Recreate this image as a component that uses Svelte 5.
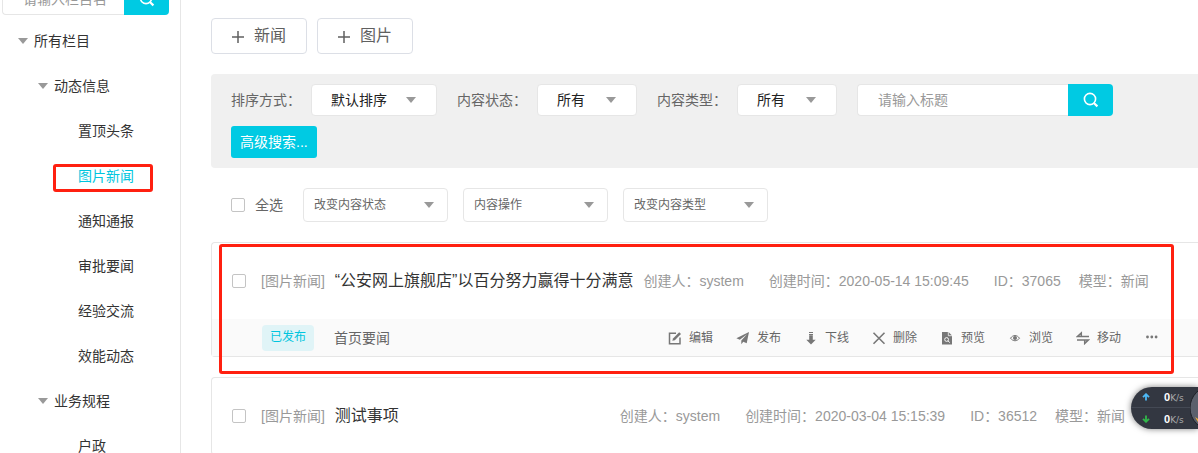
<script lang="ts">
  type Filter = { id: string; label: string; value: string; wide?: boolean };

  const sections = [
    {
      name: "动态信息",
      items: ["置顶头条", "图片新闻", "通知通报", "审批要闻", "经验交流", "效能动态"]
    },
    { name: "业务规程", items: ["户政"] }
  ];
  const activeItem = "图片新闻";

  const filters: Filter[] = [
    { id: "sort", label: "排序方式：", value: "默认排序", wide: true },
    { id: "status", label: "内容状态：", value: "所有" },
    { id: "type", label: "内容类型：", value: "所有" }
  ];

  const bulkActions = ["改变内容状态", "内容操作", "改变内容类型"];

  const articles = [
    {
      id: 37065,
      channel: "图片新闻",
      title: "“公安网上旗舰店”以百分努力赢得十分满意",
      author: "system",
      created: "2020-05-14 15:09:45",
      model: "新闻",
      status: "已发布",
      position: "首页要闻",
      marked: true
    },
    {
      id: 36512,
      channel: "图片新闻",
      title: "测试事项",
      author: "system",
      created: "2020-03-04 15:15:39",
      model: "新闻"
    }
  ];

  const actions = [
    { icon: "edit", label: "编辑" },
    { icon: "send", label: "发布" },
    { icon: "down", label: "下线" },
    { icon: "close", label: "删除" },
    { icon: "preview", label: "预览" },
    { icon: "eye", label: "浏览" },
    { icon: "move", label: "移动" }
  ];
</script>

{#snippet searchIcon()}
  <svg width="16" height="16" viewBox="0 0 16 16" fill="none" stroke="currentColor" stroke-width="1.6">
    <circle cx="7" cy="7" r="5.6" />
    <path d="M10.6 10.8 14.4 14.4" stroke-width="2.2" />
  </svg>
{/snippet}

{#snippet actionIcon(name: string)}
  <svg width="14" height="14" viewBox="0 0 14 14" fill="none" stroke="currentColor" stroke-width="1.5">
    {#if name === "edit"}
      <path d="M8 2.200H1.500v10.500h10.500V6.500" />
      <path d="M4.300 9.800 5 7.400 11.200 1.200 13 3 6.800 9.200z" fill="currentColor" stroke="none" />
    {:else if name === "send"}
      <path d="M13 1 .4 7.300l3.400 1.500L11 3.200 5.300 9.500v3.700l2-2.500 3.400 1.600z" fill="currentColor" stroke="none" />
    {:else if name === "down"}
      <path d="M5 1.500h4M5 3.500h4" stroke-width="1" />
      <path d="M5.200 4.200h3.600v4.600h2.900L7 13.400 2.300 8.800h2.900z" fill="currentColor" stroke="none" />
    {:else if name === "close"}
      <path d="M1.500 1.800 12.500 12.800M12.500 1.800 1.500 12.800" stroke-width="1.6" />
    {:else if name === "preview"}
      <path d="M2 1h6.500L12 4.500V13.500H2z" fill="currentColor" stroke="none" />
      <path d="M8.300 1v3.700H12" stroke="#fafafa" stroke-width="0.8" />
      <circle cx="6.600" cy="8.500" r="1.900" stroke="#fafafa" stroke-width="1" />
      <path d="M8 9.900 9.800 11.600" stroke="#fafafa" stroke-width="1" />
    {:else if name === "eye"}
      <path d="M2.500 7.200C5 3.600 9 3.600 11.500 7.200 9 10.600 5 10.600 2.500 7.200z" stroke-width="1" />
      <circle cx="7" cy="6.900" r="2" fill="currentColor" stroke="none" />
    {:else if name === "move"}
      <path d="M13 5.500H1.500L5.300 2v3M1 8.900h11.500L8.700 12.500v-3" />
    {:else if name === "more"}
      <g fill="currentColor" stroke="none">
        <circle cx="3.500" cy="6" r="1.400" />
        <circle cx="7.800" cy="6" r="1.400" />
        <circle cx="12.100" cy="6" r="1.400" />
      </g>
    {/if}
  </svg>
{/snippet}

<div class="app">
  <aside class="sidebar">
    <form class="search side-search">
      <input type="text" placeholder="请输入栏目名" aria-label="栏目名" />
      <button type="button" aria-label="搜索栏目">{@render searchIcon()}</button>
    </form>

    <ul class="tree">
      <li class="node root"><span class="caret"></span>所有栏目</li>
      {#each sections as section}
        <li class="node section"><span class="caret"></span>{section.name}</li>
        {#each section.items as item}
          <li class="node leaf">
            <a href="#top" class:active={item === activeItem}>{item}</a>
            {#if item === activeItem}
              <span class="mark"></span>
            {/if}
          </li>
        {/each}
      {/each}
    </ul>
  </aside>

  <main>
    <div class="toolbar">
      {#each ["新闻", "图片"] as kind}
        <button type="button" class="create">
          <svg width="12" height="14" viewBox="0 0 12 14" stroke="currentColor" stroke-width="1.5">
            <path d="M6 2v12M0 8h12" />
          </svg>
          {kind}
        </button>
      {/each}
    </div>

    <form class="filters">
      {#each filters as filter}
        <div class="field">
          <label for={filter.id}>{filter.label}</label>
          <div class="select" class:wide={filter.wide}>
            <select id={filter.id}>
              <option>{filter.value}</option>
            </select>
          </div>
        </div>
      {/each}
      <div class="search title-search">
        <input type="text" placeholder="请输入标题" aria-label="标题" />
        <button type="button" aria-label="搜索">{@render searchIcon()}</button>
      </div>
      <button type="button" class="advanced">高级搜索...</button>
    </form>

    <div class="bulk">
      <label class="check-all"><input type="checkbox" />全选</label>
      {#each bulkActions as action}
        <div class="select small">
          <select aria-label={action}>
            <option>{action}</option>
          </select>
        </div>
      {/each}
    </div>

    {#each articles as article (article.id)}
      <article class="card">
        <div class="head">
          <input type="checkbox" aria-label={article.title} />
          <span class="channel">[{article.channel}]</span>
          <span class="title">{article.title}</span>
          <span class="meta">创建人：{article.author}</span>
          <span class="meta">创建时间：{article.created}</span>
          <span class="meta">ID：{article.id}</span>
          <span class="meta model">模型：{article.model}</span>
        </div>
        {#if article.status}
          <div class="foot">
            <span class="badge">{article.status}</span>
            <span class="position">{article.position}</span>
            <div class="actions">
              {#each actions as action}
                <button type="button">{@render actionIcon(action.icon)}{action.label}</button>
              {/each}
              <button type="button" aria-label="更多">{@render actionIcon("more")}</button>
            </div>
          </div>
        {/if}
        {#if article.marked}
          <span class="mark"></span>
        {/if}
      </article>
    {/each}
  </main>

  <!-- floating network speed widget -->
  <div class="speed">
    <div class="rate up">
      <svg width="8" height="8" viewBox="0 0 8 8" fill="none" stroke="currentColor" stroke-width="1.8">
        <path d="M4 7.500V1.500M1 4.200 4 1.200 7 4.200" />
      </svg>
      <b>0</b><span>K/s</span>
    </div>
    <div class="rate down">
      <svg width="8" height="8" viewBox="0 0 8 8" fill="none" stroke="currentColor" stroke-width="1.8">
        <path d="M4 .5v6M1 3.800 4 6.800 7 3.800" />
      </svg>
      <b>0</b><span>K/s</span>
    </div>
    <svg class="ball" width="8" height="42" viewBox="0 0 8 42">
      <circle cx="22" cy="21" r="22" fill="#5b606c" stroke="#1d2026" />
      <path d="M5 30l3 2v3z" fill="#f5b23c" />
    </svg>
  </div>
</div>

<style>
  :global(body) {
    margin: 0;
    background: #fff;
  }
  .app {
    position: relative;
    display: flex;
    height: 100vh;
    overflow: hidden;
    font-family: "Liberation Sans", "Noto Sans CJK SC", sans-serif;
    font-size: 14px;
    line-height: 20px;
    color: #333;
  }
  input, button, select {
    font: inherit;
    color: inherit;
    box-sizing: border-box;
    margin: 0;
  }
  button {
    cursor: pointer;
  }
  svg {
    display: block;
    flex: none;
  }

  /* Sidebar */
  .sidebar {
    flex: none;
    width: 180px;
    border-right: 1px solid #e6e6e6;
  }
  .search {
    display: flex;
    height: 32px;
  }
  .search input {
    flex: 1;
    min-width: 0;
    padding: 0 0 0 20px;
    border: 1px solid #e6e6e6;
    border-right: none;
    border-radius: 4px 0 0 4px;
    background: #fff;
    outline: none;
  }
  .search input::placeholder {
    color: #999;
    opacity: 1;
  }
  .search button {
    display: flex;
    align-items: center;
    justify-content: center;
    width: 45px;
    padding: 0;
    border: none;
    border-radius: 0 4px 4px 0;
    background: #00cae3;
    color: #fff;
  }
  /* the column is scrolled a little, so the box starts above the top edge */
  .side-search {
    margin: -17px 11px 3px 2px;
  }
  .tree {
    list-style: none;
    margin: 0;
    padding: 0;
  }
  .node {
    position: relative;
    display: flex;
    align-items: center;
    height: 45px;
  }
  .root {
    padding-left: 18px;
  }
  .section {
    padding-left: 38px;
  }
  .leaf {
    padding-left: 78px;
  }
  .leaf a {
    color: inherit;
    text-decoration: none;
  }
  .leaf a.active {
    color: #00c5de;
  }
  .caret {
    margin-right: 6px;
    border: 5px solid transparent;
    border-top: 6px solid #999;
    border-bottom: none;
  }
  .mark {
    position: absolute;
    box-sizing: border-box;
    border: 3px solid #ff2010;
    border-radius: 3px;
    pointer-events: none;
  }
  .leaf .mark {
    top: 11px;
    left: 53px;
    width: 100px;
    height: 28px;
  }

  /* Main column */
  main {
    flex: 1;
    min-width: 0;
    padding: 18px 0 0 30px;
  }
  .toolbar {
    display: flex;
    gap: 10px;
    margin-bottom: 20px;
  }
  .create {
    display: flex;
    align-items: center;
    gap: 10px;
    height: 36px;
    padding: 0 20px;
    border: 1px solid #dcdfe6;
    border-radius: 4px;
    background: #fff;
    color: #606060;
    font-size: 16px;
  }
  .filters {
    display: flex;
    flex-wrap: wrap;
    gap: 10px 20px;
    padding: 10px 20px;
    border-radius: 4px 0 0 4px;
    background: #f0f0f0;
  }
  .field {
    display: flex;
    align-items: center;
    gap: 10px;
    color: #666;
  }
  .select {
    position: relative;
    width: 100px;
    height: 32px;
    color: #222;
  }
  .select.wide {
    width: 126px;
  }
  .select::after {
    content: "";
    position: absolute;
    top: 13px;
    right: 21px;
    border: 5px solid transparent;
    border-top: 6px solid #999;
    border-bottom: none;
    pointer-events: none;
  }
  select {
    appearance: none;
    width: 100%;
    height: 100%;
    padding: 0 0 0 19px;
    border: 1px solid #e6e6e6;
    border-radius: 4px;
    background: #fff;
    outline: none;
  }
  .title-search {
    width: 256px;
  }
  .advanced {
    height: 32px;
    padding: 0 9px;
    border: none;
    border-radius: 3px;
    background: #00cae3;
    color: #fff;
  }
  .bulk {
    display: flex;
    align-items: center;
    gap: 15px;
    padding: 20px;
    color: #666;
  }
  .check-all {
    display: flex;
    align-items: center;
    gap: 10px;
    margin-right: 5px;
  }
  input[type="checkbox"] {
    appearance: none;
    flex: none;
    width: 14px;
    height: 14px;
    border: 1px solid #c4c4c4;
    border-radius: 2px;
    background: #fff;
  }
  .select.small {
    width: 145px;
    height: 34px;
    font-size: 12px;
    color: #666;
  }
  .select.small::after {
    top: 14px;
    right: 14px;
  }
  .select.small select {
    padding-left: 10px;
  }

  /* Articles */
  .card {
    position: relative;
    margin-bottom: 20px;
    border: 1px solid #e6e6e6;
    border-right: none;
    border-radius: 4px 0 0 4px;
  }
  .head {
    display: flex;
    align-items: center;
    height: 76px;
    padding-left: 20px;
    color: #999;
    white-space: nowrap;
  }
  .channel {
    margin: 0 10px 0 15px;
  }
  .title {
    min-width: 275px;
    margin-right: 10px;
    color: #333;
    font-size: 16px;
  }
  .meta {
    margin-right: 25px;
  }
  .meta.model {
    margin-left: -7px;
  }
  .foot {
    display: flex;
    align-items: center;
    height: 37px;
    padding: 0 40px 0 50px;
    background: #fafafa;
    color: #666;
  }
  .badge {
    margin-right: 20px;
    padding: 2px 8px 4px;
    border-radius: 4px;
    background: #e0f4f7;
    color: #00c5de;
    font-size: 12px;
  }
  .actions {
    display: flex;
    gap: 23px;
    margin-left: auto;
  }
  .actions button {
    display: flex;
    align-items: center;
    gap: 7px;
    padding: 0;
    border: none;
    background: none;
    font-size: 12px;
  }
  .actions svg {
    color: #777;
  }
  .card .mark {
    top: 1px;
    right: 24px;
    left: 7px;
    height: 130px;
  }

  .speed {
    position: absolute;
    right: 0;
    bottom: 24px;
    width: 67px;
    border-radius: 21px 0 0 21px;
    background: #333741;
    box-shadow: 0 0 6px rgba(0, 0, 0, 0.5);
    overflow: hidden;
  }
  .rate {
    display: flex;
    align-items: center;
    height: 21px;
    padding-left: 11px;
    color: #aaa;
    font-family: "DejaVu Sans", sans-serif;
    font-size: 9px;
  }
  .rate b {
    margin-left: 14px;
    color: #fff;
    font-family: "Liberation Sans", sans-serif;
    font-size: 11px;
  }
  .rate span {
    padding-top: 2px;
  }
  .up {
    box-sizing: border-box;
    border-bottom: 1px solid #444954;
  }
  .up svg {
    color: #4db8f5;
  }
  .down svg {
    color: #32b84a;
  }
  .ball {
    position: absolute;
    top: 0;
    right: 0;
  }
</style>
